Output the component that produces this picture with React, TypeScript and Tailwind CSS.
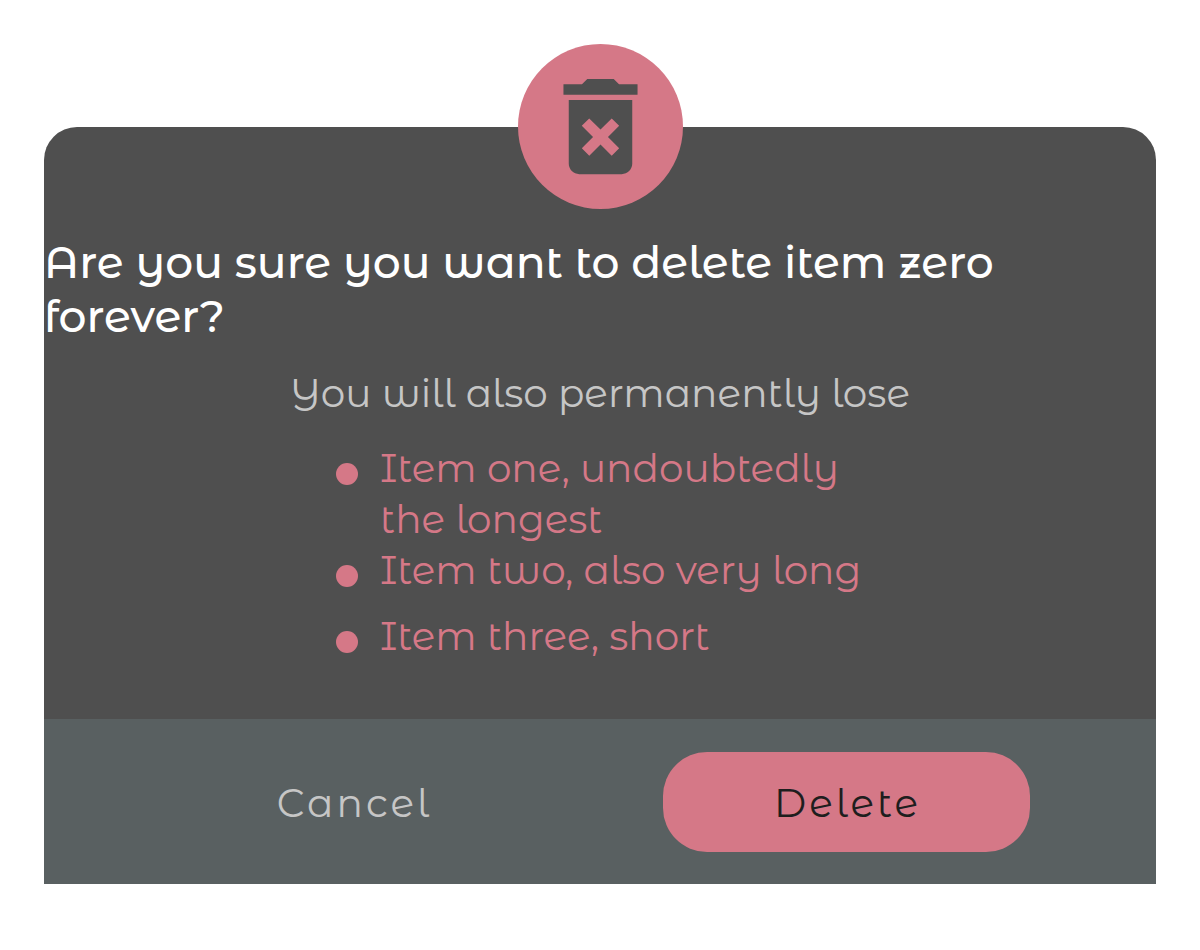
import { MdDeleteForever } from "react-icons/md";

const losses = [
  "Item one, undoubtedly the longest",
  "Item two, also very long",
  "Item three, short",
];

export default function App() {
  return (
    <main className="p-11 font-['Montserrat_Alternates',Inter,sans-serif]">
      <section
        role="dialog"
        aria-labelledby="dialog-title"
        className="flex flex-col items-center"
      >
        <div className="z-10 flex size-[165px] items-center justify-center rounded-full bg-[#d57887] text-[#4f4f4f]">
          <MdDeleteForever size={127} aria-hidden="true" />
        </div>
        <div className="-mt-[82px] flex w-full flex-col items-center rounded-t-[33px] bg-[#4f4f4f] pt-[108px] pb-[42px]">
          <h1
            id="dialog-title"
            className="w-full pr-24 text-[44px] leading-[54px] font-medium text-white"
          >
            Are you sure you want to delete item zero forever?
          </h1>
          <p className="mt-[25px] text-[39px] leading-[51px] font-normal text-[#c6c6c6]">
            You will also permanently lose
          </p>
          <ul className="mt-6 w-full max-w-[528px] text-[39px] leading-[51px] font-normal text-[#d57887]">
            {losses.map((item) => (
              <li key={item} className="flex min-h-[66px] items-start gap-[22px]">
                <span className="mt-5 size-[22px] shrink-0 rounded-full bg-[#d57887]" />
                <span>{item}</span>
              </li>
            ))}
          </ul>
        </div>
        <footer className="flex w-full justify-evenly bg-[#596061] pt-[33px] pb-8 text-[39px] font-normal">
          <button type="button" className="h-[100px] w-[33%] rounded-[44px] pt-0.5 pl-0.5 tracking-[3px] text-[#c6c6c6]">
            Cancel
          </button>
          <button type="button" className="h-[100px] w-[33%] rounded-[44px] bg-[#d57887] pt-0.5 pl-0.5 tracking-[3px] text-[#1e1e1e]">
            Delete
          </button>
        </footer>
      </section>
    </main>
  );
}
